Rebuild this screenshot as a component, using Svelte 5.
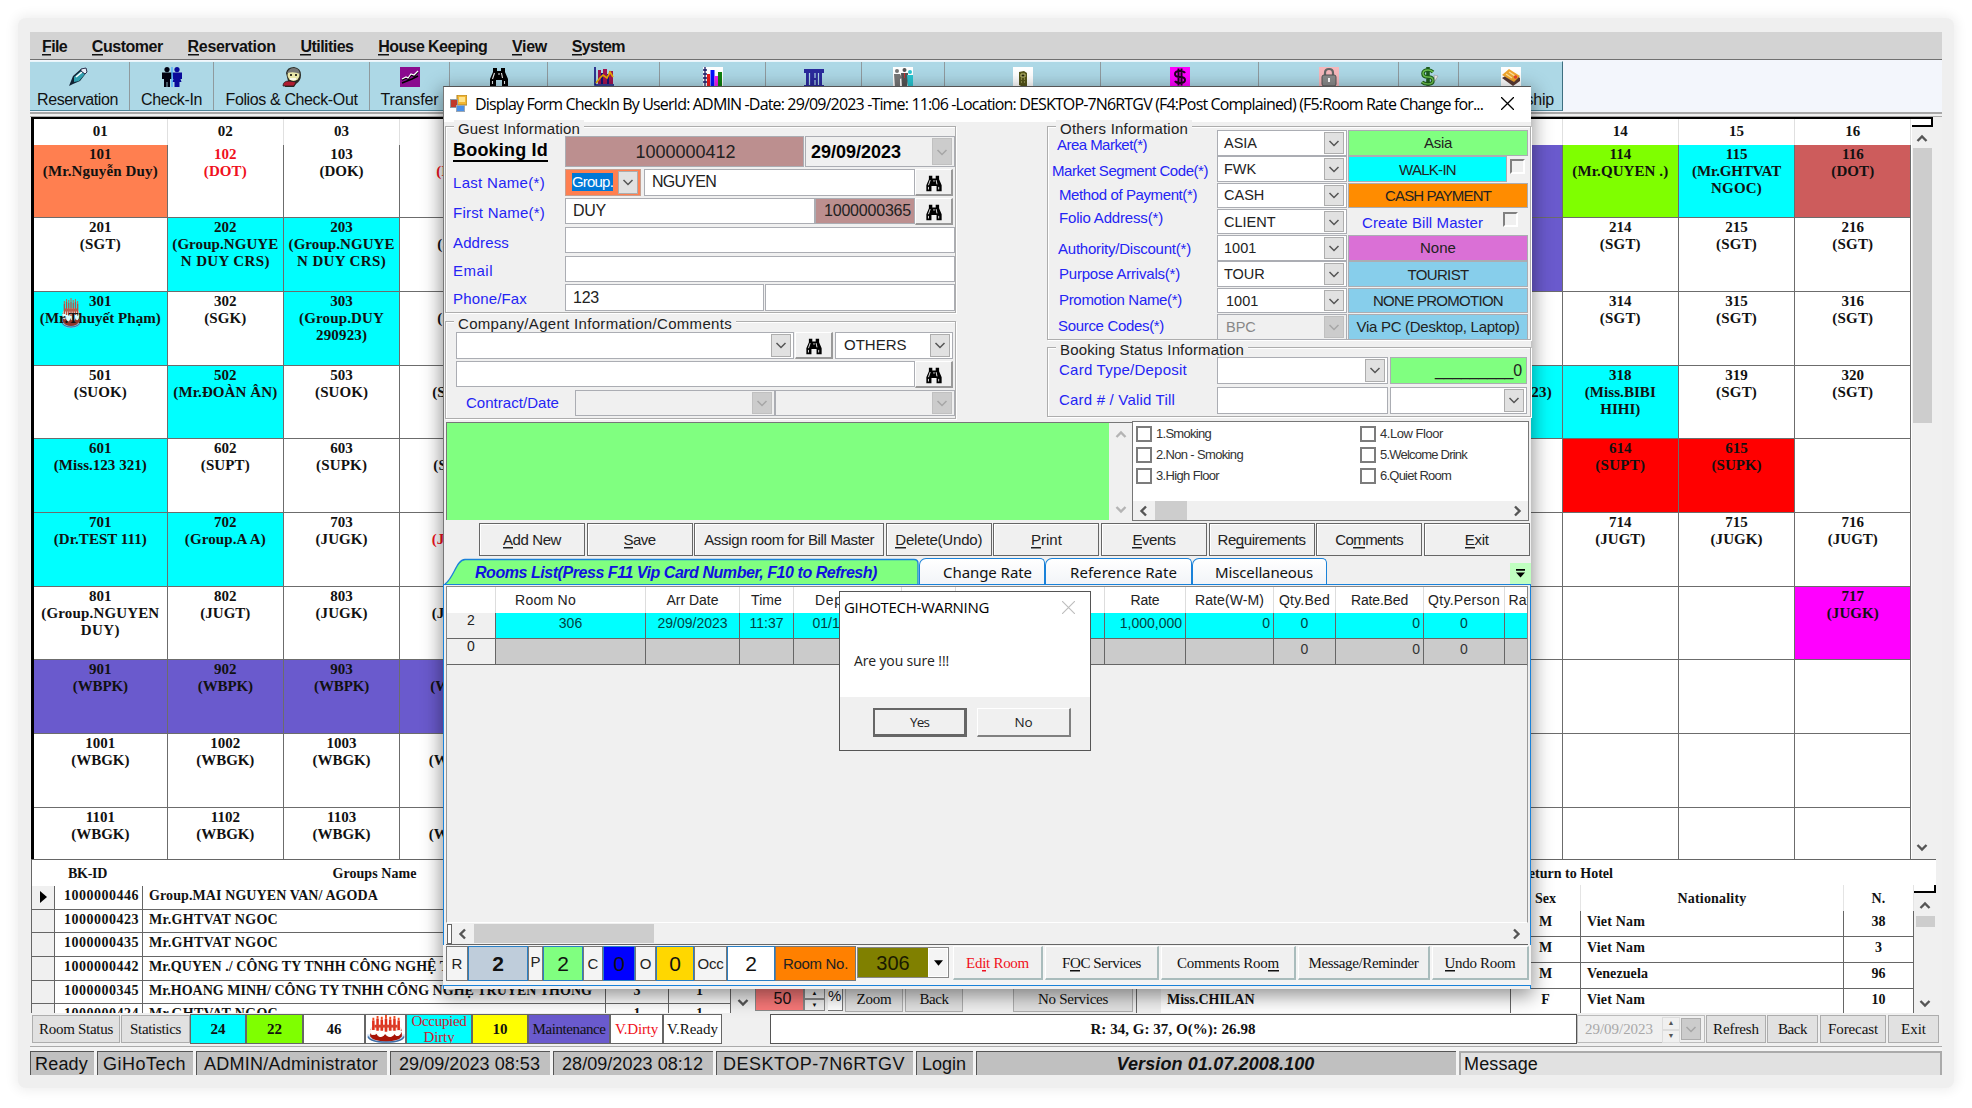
<script>
  // Spreads a label's letters so that it takes exactly `w` pixels.
  function fit(node, w) {
    if (!w) return;
    const n = [...node.textContent].length;
    node.style.letterSpacing = (w - node.getBoundingClientRect().width) / n + 'px';
  }

  const menu = [['&File', 25], ['&Customer', 71], ['&Reservation', 88], ['&Utilities', 53], ['&House Keeping', 109], ['&View', 35], ['&System', 53]];

  const tools = [
    { icon: 'pen', label: 'Reservation', w: 99, tw: 81 }, { icon: 'people', label: 'Check-In', w: 84, tw: 61 },
    { icon: 'face', label: 'Folios & Check-Out', w: 156, tw: 132 }, { icon: 'transfer', label: 'Transfer', w: 80, tw: 58 },
    { icon: 'bino', w: 98 }, { icon: 'chart', w: 112 }, { icon: 'bars', w: 106 }, { icon: 'pillars', w: 96 },
    { icon: 'team', w: 83 }, { icon: 'phone', w: 156 }, { icon: 'cash', w: 158 }, { icon: 'lock', w: 140 },
    { icon: 'dollar', w: 60 }, { icon: 'card', label: 'Membership', w: 105, tw: 86 }
  ];

  const heads = Array.from({ length: 16 }, (_, i) => String(i + 1).padStart(2, '0'));
  const e = null;
  const x9 = Array(9).fill(null);
  // room: [number, colour class, ...[line, width]]
  const rooms = [
    [['101', 'coral', ['(Mr.Nguyễn Duy)', 115]], ['102', 'redtext', ['(DOT)', 43]], ['103', '', ['(DOK)', 44]], ['104', 'redtext', ['(DOT)', 43]], ...x9.slice(1), ['', 'slate'], ['114', 'lime', ['(Mr.QUYEN .)', 96]], ['115', 'cyan', ['(Mr.GHTVAT', 89], ['NGOC)', 51]], ['116', 'indian', ['(DOT)', 43]]],
    [['201', '', ['(SGT)', 41]], ['202', 'cyan', ['(Group.NGUYE', 106], ['N DUY CRS)', 89]], ['203', 'cyan', ['(Group.NGUYE', 106], ['N DUY CRS)', 89]], ['204', '', ['(SGT)', 41]], ...x9.slice(1), ['', 'slate'], ['214', '', ['(SGT)', 41]], ['215', '', ['(SGT)', 41]], ['216', '', ['(SGT)', 41]]],
    [['301', 'cyan cake', ['(Mr.Thuyết Phạm)', 121]], ['302', '', ['(SGK)', 42]], ['303', 'cyan', ['(Group.DUY', 85], ['290923)', 51]], ['304', '', ['(SGT)', 41]], ...x9, ['314', '', ['(SGT)', 41]], ['315', '', ['(SGT)', 41]], ['316', '', ['(SGT)', 41]]],
    [['501', '', ['(SUOK)', 53]], ['502', 'cyan', ['(Mr.ĐOÀN ÂN)', 104]], ['503', '', ['(SUOK)', 53]], ['504', '', ['(SUOT)', 51]], ...x9.slice(1), ['317', 'cyan', ['(Mr.A 290923)', 96]], ['318', 'cyan', ['(Miss.BIBI', 71], ['HIHI)', 40]], ['319', '', ['(SGT)', 41]], ['320', '', ['(SGT)', 41]]],
    [['601', 'cyan', ['(Miss.123 321)', 93]], ['602', '', ['(SUPT)', 49]], ['603', '', ['(SUPK)', 51]], ['604', '', ['(SUPT)', 49]], ...x9, ['614', 'red', ['(SUPT)', 50]], ['615', 'red', ['(SUPK)', 50]], e],
    [['701', 'cyan', ['(Dr.TEST 111)', 93]], ['702', 'cyan', ['(Group.A A)', 81]], ['703', '', ['(JUGK)', 52]], ['704', 'redtext', ['(JUGK)', 52]], ...x9, ['714', '', ['(JUGT)', 50]], ['715', '', ['(JUGK)', 52]], ['716', '', ['(JUGT)', 50]]],
    [['801', '', ['(Group.NGUYEN', 118], ['DUY)', 39]], ['802', '', ['(JUGT)', 50]], ['803', '', ['(JUGK)', 52]], ['804', '', ['(JUGK)', 52]], ...x9, e, e, ['717', 'magenta', ['(JUGK)', 52]]],
    [['901', 'slate', ['(WBPK)', 55]], ['902', 'slate', ['(WBPK)', 55]], ['903', 'slate', ['(WBPK)', 55]], ['904', 'slate', ['(WBPK)', 55]], ...x9, e, e, e],
    [['1001', '', ['(WBGK)', 58]], ['1002', '', ['(WBGK)', 58]], ['1003', '', ['(WBGK)', 58]], ['1004', '', ['(WBGK)', 58]], ...x9, e, e, e],
    [['1101', '', ['(WBGK)', 58]], ['1102', '', ['(WBGK)', 58]], ['1103', '', ['(WBGK)', 58]], ['1104', '', ['(WBGK)', 58]], ...x9, e, e, e]
  ];

  const groups = [
    ['1000000446', 'Group.MAI NGUYEN VAN/ AGODA', 229, '', ''],
    ['1000000423', 'Mr.GHTVAT NGOC', 129, '', ''],
    ['1000000435', 'Mr.GHTVAT NGOC', 129, '', ''],
    ['1000000442', 'Mr.QUYEN ./ CÔNG TY TNHH CÔNG NGHỆ TRUYỀN THÔNG', 406, '', ''],
    ['1000000345', 'Mr.HOANG MINH/ CÔNG TY TNHH CÔNG NGHỆ TRUYỀN THÔNG', 443, '3', '1'],
    ['1000000424', 'Mr.GHTVAT NGOC', 129, '1', '1']
  ];
  const guests = [['', 'M', 'Viet Nam', 58, '38'], ['', 'M', 'Viet Nam', 58, '3'], ['', 'M', 'Venezuela', 61, '96'], ['Miss.CHILAN', 'F', 'Viet Nam', 58, '10']];

  const legend = [
    ['24', 'cyan b', 56], ['22', 'lime b', 57], ['46', 'b', 62], ['', 'cakebox', 41], ['Occupied Dirty', 'cyan rt', 66],
    ['10', 'yellow b', 56], ['Maintenance', 'slate', 82, 73], ['V.Dirty', 'rt', 53, 43], ['V.Ready', '', 59, 51]
  ];

  const status = [
    ['Ready', 64, 53], ['GiHoTech', 96, 83], ['ADMIN/Administrator', 191, 174], ['29/09/2023 08:53', 160, 141],
    ['28/09/2023 08:12', 160, 141], ['DESKTOP-7N6RTGV', 197, 182], ['Login', 57, 44]
  ];

  const others = [
    ['Area Market(*)', 90, 0, 10], ['Market Segment Code(*)', 156, 8, 5], ['Method of Payment(*)', 138, 6, 12], ['Folio Address(*)', 104, 5, 12],
    ['Authority/Discount(*)', 133, 13, 11], ['Purpose Arrivals(*)', 121, 7, 12], ['Promotion Name(*)', 123, 8, 12], ['Source Codes(*)', 106, 8, 11]
  ];
  const codes = [
    ['ASIA', 'Asia', 'lgreen', 28], ['FWK', 'WALK-IN', 'cyan', 57], ['CASH', 'CASH PAYMENT', 'orange', 106], ['CLIENT', '', 'bill', 0],
    ['1001', 'None', 'orchid', 36], ['TOUR', 'TOURIST', 'sky', 61], ['1001', 'NONE PROMOTION', 'sky', 130], ['BPC', 'Via PC (Desktop, Laptop)', 'sky', 163]
  ];

  const prefs = [['1.Smoking', 55, '4.Low Floor', 63], ['2.Non - Smoking', 87, '5.Welcome Drink', 87], ['3.High Floor', 63, '6.Quiet Room', 71]];

  const actions = [
    ['&Add New', 106, 58], ['&Save', 106, 32], ['Assign room for Bill Master', 190, 170], ['&Delete(Undo)', 106, 87], ['&Print', 106, 31],
    ['&Events', 106, 43], ['Re&quirements', 106, 88], ['Co&mments', 106, 68], ['&Exit', 106, 24]
  ];

  const cols = [
    ['', 49, '2', '0', 0, ''], ['Room No', 150, '306', '', 61, 'c rn'], ['Arr Date', 94, '29/09/2023', '', 52, 'c'], ['Time', 54, '11:37', '', 31, 'c'],
    ['Dep Date', 108, '01/10/2023', '', 65, 'c'], ['Time', 54, '12:00', '', 31, 'c'], ['Rate Name', 149, '', '', 66, 'c'],
    ['Rate', 81, '1,000,000', '', 29, 'r'], ['Rate(W-M)', 88, '0', '', 69, 'r'], ['Qty.Bed', 62, '0', '0', 51, 'c'],
    ['Rate.Bed', 88, '0', '0', 57, 'r'], ['Qty.Person', 81, '0', '0', 72, 'c'], ['Rate.Person', 86, '', '', 78, 'c']
  ];

  const totals = [
    ['R', 22, 'tag', 0], ['2', 60, 'steel num b', 0], ['P', 15, 'tag raised', 0], ['2', 40, 'lgreen num', 0], ['C', 20, 'tag', 0], ['0', 32, 'blue num', 0],
    ['O', 21, 'tag', 0], ['0', 38, 'gold num', 0], ['Occ', 33, 'tag', 26], ['2', 48, 'white num', 0], ['Room No.', 81, 'dorange', 65]
  ];
  const roomButtons = [['Ed&it Room', 90, 63, 'rt'], ['F&OC Services', 114, 79, ''], ['Comments Roo&m', 135, 102, ''], ['Message/Reminder', 132, 110, ''], ['&Undo Room', 97, 71, '']];
</script>

{#snippet acc(text, w)}
  {@const i = text.indexOf('&')}
  <span class="t" use:fit={w}>{#if i < 0}{text}{:else}{text.slice(0, i)}<u>{text[i + 1]}</u>{text.slice(i + 2)}{/if}</span>
{/snippet}

{#snippet t(text, w)}<span class="t" use:fit={w}>{text}</span>{/snippet}

{#snippet chev(dir)}
  <svg class="chev to-{dir}" viewBox="0 0 12 12"><path d="M1.5 4 6 8.5 10.5 4" fill="none" stroke="currentColor" stroke-width="1.5" /></svg>
{/snippet}

{#snippet cake()}
  <svg class="cakeicon" viewBox="0 0 36 30" preserveAspectRatio="none">
    <path d="M0 21q1 9 18 9t18-9z" fill="#c9dcf2" /><path d="M1 23q2 6 17 6t17-6" fill="none" stroke="#3f6fa8" stroke-width="1.5" />
    <path d="M3 15v8q3 5 15 5t15-5v-8z" fill="#a81408" />
    <ellipse cx="18" cy="15" rx="15" ry="5" fill="#f6e4dc" />
    <path d="M3 16q0 5 3 5t3-3q1 5 4 5t4-4q2 4 5 4t4-4q1 3 3 3t4-5" fill="#fff" stroke="#fff" />
    <path d="M6 16V6M10 17V4M14 17V5M18 18V4M22 17V5M26 17V4M30 16V6" stroke="#e0301c" stroke-width="2.4" />
    <path d="M7 12h22" stroke="#d8402c" stroke-width="3" />
    <path d="M6 6V3M10 4V1M14 5V2M18 4V0M22 5V2M26 4V1M30 6V3" stroke="#f04a20" stroke-width="1.8" />
  </svg>
{/snippet}

{#snippet icon(name)}
  <svg class="icon" viewBox="0 0 20 20">
    {#if name === 'pen'}
      <path d="M1 19 5 9 13 2l5-1 1 4-7 9-7 3z" fill="#123" /><path d="m6 10 7-6 4 3-6 7-5 1z" fill="#2f9fae" /><path d="m8 10 6-5" stroke="#fff" stroke-width="1.6" /><path d="m13 2 5-1 1 4-2 2-4-3z" fill="#e8eef8" stroke="#113" stroke-width=".8" />
    {:else if name === 'people'}
      <g fill="#000010"><circle cx="5" cy="2.6" r="2.6" /><path d="M0 5.500h9.500V12H8v8H5.400v-5h-.8v5H2v-8H0z" /></g><g fill="#0a0a9a"><circle cx="15" cy="2.6" r="2.6" /><path d="M10.500 5.500H20V12h-1.500l1 3h-2v5h-5v-5h-2l1-3h-.500z" /></g><path d="M10 0v20" stroke="#2aa0ff" />
    {:else if name === 'face'}
      <path d="M4 6Q5 0 12 0q7 1 7 8 0 6-5 9l-2 3H3q0-5 3-6z" fill="#2a2a24" /><circle cx="11.5" cy="8" r="6" fill="#e9e6a8" /><path d="M5 6q2-5 7-5 5 0 6 6-6-3-13-1z" fill="#777" /><path d="M8 8h2M13 8h2" stroke="#000" stroke-width="1.4" /><path d="M1 19q0-5 6-5l7 1-2 4z" fill="#b01c30" stroke="#222" stroke-width=".8" /><path d="M8 12h6" stroke="#fff" stroke-width="1.5" />
    {:else if name === 'transfer'}
      <rect width="20" height="20" fill="#8a0a8e" /><path d="m2 13 4-2 2 1 3-4 3 1 4-4M2 16l5-2 5-2 6-3" stroke="#000" stroke-width="1.6" fill="none" /><path d="m2 12 4-2 2 1 3-4 3 1 4-4" stroke="#fff" stroke-width="1.2" fill="none" />
    {:else if name === 'bino'}
      <path d="M4 1h4v3h4V1h4v4l3 7v7h-6v-6H7v6H1v-7l3-7z" fill="#000" /><path d="M5.5 6 3.5 12M12.5 6l1 5M3.5 14v3M15.5 14v3M9 7h2" stroke="#e8e8e8" stroke-width="1.1" />
    {:else if name === 'chart'}
      <path d="M1 0v18h19" stroke="#10107c" stroke-width="1.6" fill="none" /><path d="M4 3h3v14H4zM9 2h4v15H9zM15 4h4v13h-4z" fill="#a01450" /><path d="M7 6h2v11H7zM13 7h2v10h-2z" fill="#141478" /><path d="m2 16 4-5 3-3 4 3 3-6 3 5" stroke="#e8a800" stroke-width="1.7" fill="none" />
    {:else if name === 'bars'}
      <rect width="20" height="20" fill="#fff" /><path d="M2 0v20M0 3h4M0 7h4M0 11h4M0 15h4" stroke="#1a1a66" stroke-width="1.3" /><path d="M4 7h3v13H4z" fill="#e81818" /><path d="M7.500 3h4v17h-4z" fill="#0010ff" /><path d="M11.500 9h3.500v11h-3.500z" fill="#f020f0" /><path d="M15 5h4v15h-4z" fill="#108010" />
    {:else if name === 'pillars'}
      <path d="M0 2h20v4h-2v12h2v2H0v-2h2V6H0z" fill="#2a2a9c" /><path d="M5.500 6v12M11 6v5M11 13v5M14.500 6v12" stroke="#add8e6" stroke-width="1.2" />
    {:else if name === 'team'}
      <rect width="20" height="20" fill="#fff" /><g fill="#777"><circle cx="4" cy="4" r="2" /><path d="M1 7h6l2 4-2 1v8H2z" /></g><g fill="#555"><circle cx="11.500" cy="3" r="2" /><path d="M8 6h7v8l-1 6H9z" /></g><g fill="#28c4d0"><circle cx="17" cy="5" r="2" /><path d="M14 8h6v12h-5z" /></g><path d="M11.500 6v5" stroke="#c33" />
    {:else if name === 'phone'}
      <rect width="20" height="20" fill="#fff" /><path d="m6 5 5-1 3 2v13l-4 1-4-2z" fill="#55551a" /><path d="M8 7h4v3H8zM8 12h1M11 12h1M8 15h1M11 15h1" stroke="#c8c87a" fill="#22220a" />
    {:else if name === 'cash'}
      <rect width="20" height="20" fill="#ff00ff" /><path d="M15 6Q14 4 10 4 5 4 5 7t5 3 5 3-5 3q-4 0-5-2M8.500 1.500v17M11.500 1.500v17" stroke="#200020" stroke-width="2" fill="none" />
    {:else if name === 'lock'}
      <rect width="20" height="20" fill="#f7b8bc" /><path d="M6 9V6q0-4 4-4t4 4v3" stroke="#666" stroke-width="2.200" fill="none" /><rect x="3" y="8" width="14" height="11" rx="2" fill="#8b8b8b" stroke="#555" /><path d="M10 11v4" stroke="#fff" stroke-width="2" />
    {:else if name === 'dollar'}
      <path d="M14 5Q12 3 9 3 4 3 4 6.500T9 10t5 3.500T9 17q-4 0-6-2M9 0v20" stroke="#1c5c1c" stroke-width="3.600" fill="none" /><path d="M14 5Q12 3 9 3 4 3 4 6.500T9 10t5 3.500T9 17q-4 0-6-2" stroke="#6cc04c" stroke-width="1.500" fill="none" /><path d="m15 8 4 1-3 5z" fill="#eee" stroke="#999" stroke-width=".6" />
    {:else}
      <rect width="20" height="20" fill="#fff" /><path d="m1 11 11 8 7-5v-3l-8-6z" fill="#5a3a34" /><path d="m1 8 7-6 11 7-6 6z" fill="#f2a62c" /><path d="m5 7 6 4M8 5l6 4" stroke="#ffe49a" stroke-width="1.300" /><circle cx="14.500" cy="10" r="1.800" fill="#e8452a" />
    {/if}
  </svg>
{/snippet}

{#snippet combo(text, cls)}
  <span class="field combo {cls}">{#if text}<span class="val">{text}</span>{/if}<span class="drop">{@render chev('down')}</span></span>
{/snippet}

{#snippet findButton()}<span class="find">{@render icon('bino')}</span>{/snippet}

<div class="desk">
  <div class="glow"></div>
  <div class="app">
    <nav class="menu">
      {#each menu as [label, w]}{@render acc(label, w)}{/each}
    </nav>

    <div class="toolbar">
      <div class="tools">
        {#each tools as tool}
          <div class="tool" style:width="{tool.w}px">
            {@render icon(tool.icon)}
            {#if tool.label}{@render t(tool.label, tool.tw)}{/if}
          </div>
        {/each}
      </div>
    </div>
    <div class="ruleline"></div>

    <div class="board">
      <div class="rooms">
        {#each heads as h}<div class="head">{h}</div>{/each}
        {#each rooms as row}
          {#each row as room}
            <div class="room {room?.[1] ?? ''}">
              {#if room}
                {#if room[1].includes('cake')}<i class="cakepin">{@render cake()}</i>{/if}
                {#if room[0]}<span>{room[0]}</span>{/if}
                {#each room.slice(2) as [line, w]}{@render t(line, w)}{/each}
              {/if}
            </div>
          {/each}
        {/each}
      </div>
      <div class="vbar tall">
        <span class="stub"></span>
        {@render chev('up')}
        <span class="thumb"></span>
        <span class="grow"></span>
        {@render chev('down')}
      </div>
    </div>

    <div class="lower">
      <div class="groups">
        <div class="ghead"><span>{@render t('BK-ID', 39)}</span><span>{@render t('Groups Name', 84)}</span></div>
        {#each groups as g, i}
          <div class="grow-row">
            <span class="mark">{#if i === 0}<svg viewBox="0 0 8 12"><path d="M1 0 8 6 1 12z" /></svg>{/if}</span>
            <span class="id">{@render t(g[0], 75)}</span><span class="name">{@render t(g[1], g[2])}</span><span class="n">{g[3]}</span><span class="n">{g[4]}</span>
          </div>
        {/each}
      </div>
      <div class="gbar">{@render chev('down')}</div>
      <div class="zoomer">
        <span class="pct">50</span>
        <span class="spin"><i>▲</i><i>▼</i></span>
        <span class="sign">%</span>
        <span class="btn zb">{@render t('Zoom', 35)}</span>
        <span class="btn zb">{@render t('Back', 29)}</span>
        <span class="btn nos">{@render t('No Services', 70)}</span>
      </div>
      <div class="guests">
        <div class="gtitle">{@render t('Guest Return to Hotel', 133)}</div>
        <div class="gbody">
          <div class="gt">
            <div class="gth"><span></span><span>{@render t('Sex', 21)}</span><span>{@render t('Nationality', 69)}</span><span>{@render t('N.', 14)}</span></div>
            {#each guests as g}
              <div class="gtr"><span class="l">{g[0]}</span><span>{g[1]}</span><span class="l">{@render t(g[2], g[3])}</span><span>{g[4]}</span></div>
            {/each}
          </div>
          <div class="vbar short">
            <span class="stub"></span>
            {@render chev('up')}
            <span class="thumb"></span>
            <span class="grow"></span>
            {@render chev('down')}
          </div>
        </div>
      </div>
    </div>

    <div class="footer">
      <span class="btn rs">{@render t('Room Status', 74)}</span>
      <span class="btn st">{@render t('Statistics', 51)}</span>
      {#each legend as [label, cls, w, tw]}
        <span class="key {cls}" style:width="{w}px">{#if cls === 'cakebox'}{@render cake()}{:else if label.includes(' ')}<span class="two">{@render t('Occupied', 55)}{@render t('Dirty', 31)}</span>{:else}{@render t(label, tw)}{/if}</span>
      {/each}
      <span class="summary">{@render t('R: 34, G: 37, O(%): 26.98', 165)}</span>
      <span class="fdate">{@render t('29/09/2023', 68)}<span class="ud"><i>▲</i><i>▼</i></span><span class="drop">{@render chev('down')}</span></span>
      <span class="btn f1">{@render t('Refresh', 46)}</span>
      <span class="btn f2">{@render t('Back', 29)}</span>
      <span class="btn f3">{@render t('Forecast', 50)}</span>
      <span class="btn f4">{@render t('Exit', 25)}</span>
    </div>

    <div class="status">
      {#each status as [label, w, tw]}<span class="panel" style:width="{w}px">{@render t(label, tw)}</span>{/each}
      <span class="panel version">{@render t('Version 01.07.2008.100', 198)}</span>
      <span class="panel message">{@render t('Message', 74)}</span>
    </div>
  </div>

  <section class="dialog">
    <header class="title">
      <svg class="appicon" viewBox="0 0 17 17"><rect x="7" y="0" width="10" height="10" fill="#f2b632" stroke="#b0842a" /><rect x="9" y="2" width="6" height="5" fill="#ffe38a" /><rect x=".5" y="4.500" width="7" height="8" fill="#c0392b" stroke="#8d9aa5" /><rect x="6.500" y="10.500" width="8" height="6" fill="#4a90e8" stroke="#9aa7b5" /></svg>
      {@render t('Display Form CheckIn By UserId: ADMIN -Date: 29/09/2023 -Time: 11:06 -Location: DESKTOP-7N6RTGV (F4:Post Complained) (F5:Room Rate Change for...', 1008)}
      <svg class="close" viewBox="0 0 12 12"><path d="m0 0 12 12M12 0 0 12" stroke="#000" stroke-width="1.200" /></svg>
    </header>

    <div class="forms">
      <div class="left">
        <div class="box guest">
          <span class="legend">{@render t('Guest Information', 122)}</span>
          <div class="row first"><label class="bk">{@render t('Booking Id', 95)}</label><span class="field rose bid">{@render t('1000000412', 100)}</span><span class="field combo off bdate"><b>{@render t('29/09/2023', 90)}</b><span class="drop">{@render chev('down')}</span></span></div>
          <div class="row"><label>{@render t('Last Name(*)', 92)}</label><span class="field combo coral grp"><span class="sel">{@render t('Group.', 41)}</span><span class="drop">{@render chev('down')}</span></span><span class="field last">{@render t('NGUYEN', 64)}</span>{@render findButton()}</div>
          <div class="row"><label class="lo">{@render t('First Name(*)', 92)}</label><span class="field fn">{@render t('DUY', 33)}</span><span class="field rose gid">{@render t('1000000365', 87)}</span>{@render findButton()}</div>
          <div class="row"><label class="lower-l">{@render t('Address', 56)}</label><span class="field wide"></span></div>
          <div class="row"><label class="lo">{@render t('Email', 40)}</label><span class="field wide"></span></div>
          <div class="row"><label class="lo">{@render t('Phone/Fax', 74)}</label><span class="field ph">{@render t('123', 26)}</span><span class="field fx"></span></div>
        </div>
        <div class="box company">
          <span class="legend">{@render t('Company/Agent Information/Comments', 274)}</span>
          <div class="row">{@render combo('', 'agent')}{@render findButton()}{@render combo('OTHERS', 'oth')}</div>
          <div class="row"><span class="field note"></span>{@render findButton()}</div>
          <div class="row"><label class="ct">{@render t('Contract/Date', 93)}</label>{@render combo('', 'off c1')}{@render combo('', 'off c2')}</div>
        </div>
      </div>

      <div class="right">
        <div class="box info">
          <span class="legend">{@render t('Others Information', 128)}</span>
          <div class="labels">
            {#each others as [label, w, gap, pad]}<label style:margin-top="{gap}px" style:padding-left="{pad - 5}px">{@render t(label, w)}</label>{/each}
          </div>
          <div class="codes">
            {#each codes as [code, name, cls, w], i}
              <div class="code">
                {@render combo(code, i === 7 ? 'off cc' : 'cc')}
                {#if cls === 'bill'}
                  <span class="bill">{@render t('Create Bill Master', 121)}<i class="chk"></i></span>
                {:else}
                  <span class="field cn {cls}">{@render t(name, w)}</span>{#if i === 1}<i class="chk seg"></i>{/if}
                {/if}
              </div>
            {/each}
          </div>
        </div>
        <div class="box booking">
          <span class="legend">{@render t('Booking Status Information', 184)}</span>
          <div class="row"><label>{@render t('Card Type/Deposit', 128)}</label>{@render combo('', 'card')}<span class="field lgreen dep">{@render t('_________0', 87)}</span></div>
          <div class="row"><label>{@render t('Card # / Valid Till', 116)}</label><span class="field card"></span>{@render combo('', 'till')}</div>
        </div>
      </div>
    </div>

    <div class="mid">
      <div class="memo"><div class="memobar">{@render chev('up')}{@render chev('down')}</div></div>
      <div class="prefs">
        {#each prefs as [a, aw, b, bw]}
          <div class="pref"><i></i>{@render t(a, aw)}<i></i>{@render t(b, bw)}</div>
        {/each}
        <div class="hbar">{@render chev('left')}<span class="thumb"></span><span class="grow"></span>{@render chev('right')}</div>
      </div>
    </div>

    <div class="actions">
      {#each actions as [label, w, tw]}<span class="act" style:width="{w}px">{@render acc(label, tw)}</span>{/each}
    </div>

    <div class="tabs">
      <div class="tab on">
        <svg viewBox="0 0 475 26" preserveAspectRatio="none"><path d="M1 26C10 20 12 2 21 1.500H470q4 0 4 4V26" fill="#80ff80" stroke="#1a82d9" stroke-width="1.300" /></svg>
        {@render t('Rooms List(Press F11 Vip Card Number, F10 to Refresh)', 402)}
      </div>
      <div class="tab t1">{@render t('Change Rate', 89)}</div>
      <div class="tab t2">{@render t('Reference Rate', 107)}</div>
      <div class="tab t3">{@render t('Miscellaneous', 98)}</div>
      <div class="more"><svg viewBox="0 0 10 10"><path d="M0 0h10v2H0zM0 4h10L5 9.500z" /></svg></div>
    </div>

    <div class="page">
      <div class="sheet">
        {#each cols as [head, w, a, b, hw, al], i}
          <div class="col {al}" class:rowhead={i === 0} style:width="{w}px">
            <div class="ch">{#if head}{@render t(head, hw)}{/if}</div><div class="c1r">{a}</div><div class="c2r">{b}</div>
          </div>
        {/each}
      </div>
      <div class="blank"></div>
      <div class="hbar wide-bar"><i class="split"></i>{@render chev('left')}<span class="thumb"></span><span class="grow"></span>{@render chev('right')}</div>
      <div class="totals">
        {#each totals as [label, w, cls, tw]}<span class="tot {cls}" style:width="{w}px">{@render t(label, tw)}</span>{/each}
        <span class="pick"><span>306</span><i><svg viewBox="0 0 10 6"><path d="M0 0h10L5 6z" /></svg></i></span>
        {#each roomButtons as [label, w, tw, cls]}<span class="rb {cls}" style:width="{w}px">{@render acc(label, tw)}</span>{/each}
      </div>
    </div>
  </section>

  <section class="modal">
    <header>{@render t('GIHOTECH-WARNING', 145)}<svg viewBox="0 0 12 12"><path d="m0 0 12 12M12 0 0 12" stroke="#bdbdbd" /></svg></header>
    <p>{@render t('Are you sure !!!', 95)}</p>
    <footer><span class="yes">{@render t('Yes', 19)}</span><span class="no">{@render t('No', 18)}</span></footer>
  </section>
</div>

<style>
  :global(body) { margin: 0; background: #fff; }
  * { box-sizing: border-box; }
  .desk { position: relative; width: 1972px; height: 1108px; padding: 32px 30px; overflow: hidden; background: #fff; font: 15px/18px "Liberation Sans", Arial, sans-serif; color: #111; }
  .glow { position: absolute; left: 18px; top: 18px; width: 1936px; height: 1070px; border-radius: 8px; background: #efefef; box-shadow: 0 0 12px 3px #efefef; }
  .t { display: inline-block; white-space: nowrap; flex: none; }
  u { text-decoration: none; background: linear-gradient(currentColor, currentColor) left bottom / 100% 1.500px no-repeat; padding-bottom: 1px; }
  i { font-style: normal; }
  .grow { flex: 1; }
  .icon { width: 20px; height: 20px; flex: none; }
  .chev { width: 12px; height: 12px; flex: none; color: #555; }
  .chev.to-up { transform: rotate(180deg); }
  .chev.to-left { transform: rotate(90deg); }
  .chev.to-right { transform: rotate(-90deg); }
  .vbar .chev path, .hbar .chev path, .gbar .chev path, .memobar .chev path { stroke-width: 2.4; }

  .cyan { background: #0ff; }
  .coral { background: #ff7f50; }
  .lime { background: #7fff00; }
  .indian { background: #cd5c5c; }
  .slate { background: #6a5acd; }
  .red { background: #f00; }
  .magenta { background: #f0f; }
  .yellow { background: #ff0; }
  .redtext, .rt { color: #f01020; }
  .b { font-weight: bold; }

  .app { position: relative; width: 1912px; height: 1043px; display: flex; flex-direction: column; background: #f0f0f0; }
  .menu { height: 28px; flex: none; background: #d3d3d3; border-bottom: 1px solid #707070; display: flex; gap: 24.800px; align-items: center; padding: 2px 0 0 12px; font-weight: bold; font-size: 16px; }
  .toolbar { height: 52px; flex: none; background: #f3f6fc; padding-top: 1px; }
  .tools { display: flex; width: 1533px; height: 50px; background: #add8e6; border-right: 1px solid #3d6f80; border-bottom: 1px solid #4f8699; border-top: 1px solid #e8f6fb; }
  .tool { flex: none; display: flex; flex-direction: column; align-items: center; padding-top: 5px; gap: 4px; font-size: 16px; border-left: 1px solid #8f9a9e; }
  .tool:first-child { border-left: 0; padding-right: 4px; }
  .ruleline { height: 5px; flex: none; background: #f0f0f0; border-top: 2px solid #a8a8a8; border-bottom: 1px solid #aaa; }

  .board { height: 742px; flex: none; margin-left: 1px; display: flex; border-top: 2px solid #000; border-left: 3px solid #000; width: 1902px; background: #fff; }
  .rooms { display: grid; grid-template-columns: 133.700px repeat(15, 116.250px); grid-template-rows: 25.800px; grid-auto-rows: 73.670px; width: 1877.700px; height: 740px; overflow: hidden; font: bold 15px/17px "Liberation Serif", "Times New Roman", serif; text-align: center; }
  .head { border-right: 1px solid #e0e0e0; padding-top: 4px; }
  .room { position: relative; border-right: 1px solid #6c6c6c; border-bottom: 1px solid #6c6c6c; padding-top: 1px; display: flex; flex-direction: column; align-items: center; overflow: hidden; }
  .cakepin { position: absolute; left: 27px; top: 6px; width: 20px; height: 30px; display: flex; opacity: .85; }
  .cakepin .cakeicon { width: 20px; height: 30px; }
  .room > span { position: relative; }
  .vbar { display: flex; flex-direction: column; align-items: center; background: #f0f0f0; }
  .tall { width: 21px; padding-bottom: 6px; }
  .stub { width: 100%; height: 8px; background: #fff; border-right: 2px solid #000; border-bottom: 2px solid #000; margin-bottom: 6px; flex: none; }
  .tall .thumb { width: 19px; height: 275px; margin-top: 3px; background: #cdcdcd; }

  .lower { height: 154px; flex: none; display: flex; overflow: hidden; background: #f0f0f0; border-top: 1px solid #666; margin: 0 6px 0 1px; font: bold 14px/17px "Liberation Serif", "Times New Roman", serif; }
  .groups { width: 700px; flex: none; background: #fff; border-left: 1px solid #666; }
  .grow-row { display: grid; grid-template-columns: 23px 88px 463px 63px 62px; }
  .ghead { display: grid; grid-template-columns: 111px 463px; height: 26px; text-align: center; align-items: center; }
  .grow-row { height: 23.670px; }
  .grow-row > span { border-right: 1px solid #666; border-bottom: 1px solid #666; padding-top: 1px; white-space: nowrap; overflow: hidden; }
  .mark { background: #f0f0f0; padding-left: 7px; }
  .mark svg { width: 8px; height: 12px; margin-top: 4px; }
  .id { padding-left: 9px; }
  .name { padding-left: 6px; }
  .n { text-align: center; }
  .gbar { width: 24px; flex: none; display: flex; align-items: flex-end; justify-content: center; padding-bottom: 5px; }
  .zoomer { width: 381px; flex: none; display: flex; padding-top: 127px; font-weight: normal; font-size: 15px; }
  .btn { display: flex; align-items: center; justify-content: center; background: #e1e1e1; border: 1px solid #adadad; font-family: "Liberation Serif", "Times New Roman", serif; font-size: 15px; font-weight: normal; flex: none; }
  .pct { width: 49px; height: 24px; background: #f87878; border: 1px solid #888; display: flex; align-items: center; justify-content: center; font: 16px "Liberation Sans", Arial, sans-serif; padding-left: 6px; flex: none; }
  .spin, .ud { display: flex; flex-direction: column; }
  .spin { width: 21px; height: 24px; }
  .spin i { flex: 1; font-size: 6px; line-height: 10px; text-align: center; border: 1px solid #888; background: #eee; }
  .sign { width: 15px; height: 24px; margin-left: 3px; background: #fff; border-right: 1px solid #777; border-bottom: 1px solid #777; flex: none; font-family: "Liberation Sans", Arial, sans-serif; }
  .zb { width: 58px; height: 25px; margin-left: 2px; }
  .nos { width: 120px; height: 25px; margin-left: 50px; padding-bottom: 1px; }
  .guests { flex: 1; background: #fff; border-left: 1px solid #666; }
  .gtitle { height: 25px; padding: 5px 0 0 343px; }
  .gbody { display: flex; }
  .gt { width: 777px; flex: none; border-left: 24px solid #f0f0f0; }
  .gth, .gtr { display: grid; grid-template-columns: 350px 70px 263px 1fr; text-align: center; }
  .gth { height: 26px; line-height: 28px; }
  .gth > span { border-right: 1px solid #e4e4e4; }
  .gtr { height: 26px; }
  .gtr > span { border-right: 1px solid #666; border-bottom: 1px solid #666; padding-top: 2px; }
  .gtr .l { text-align: left; padding-left: 6px; }
  .short { width: 22px; height: 128px; padding-bottom: 4px; }
  .short .stub { margin-bottom: 7px; }
  .short .thumb { width: 19px; height: 11px; margin-top: 4px; background: #cdcdcd; }

  .footer { height: 33px; flex: none; display: flex; padding: 1px 0 0 2px; font: 15px/17px "Liberation Serif", "Times New Roman", serif; align-items: flex-start; }
  .footer .btn { height: 28px; margin-top: 1px; padding-top: 1px; }
  .rs { width: 88px; }
  .st { width: 69px; margin-left: 1px; }
  .key { height: 30px; border: 1px solid #666; background: #fff; display: flex; align-items: center; justify-content: center; overflow: hidden; flex: none; }
  .key.cyan { background: #0ff; } .key.lime { background: #7fff00; } .key.yellow { background: #ff0; } .key.slate { background: #6a5acd; }
  .two { display: flex; flex-direction: column; align-items: center; line-height: 16px; margin-top: -1px; color: #d02030; }
  .cakebox .cakeicon { width: 38px; height: 28px; }
  .summary { width: 807px; height: 30px; margin-left: 48px; border: 1px solid #555; background: #fff; display: flex; align-items: center; justify-content: center; font-weight: bold; padding: 1px 1px 0 0; flex: none; }
  .fdate { width: 128px; height: 28px; margin-top: 1px; border: 1px solid #bbb; display: flex; align-items: center; padding: 1px 2px 1px 7px; color: #a8a8a8; flex: none; }
  .ud { width: 18px; height: 24px; margin-left: 9px; }
  .ud i { flex: 1; font-size: 7px; line-height: 11px; text-align: center; color: #555; border: 1px solid #ddd; }
  .fdate .drop { margin: 0 0 0 1px; background: #ccc; }
  .fdate .chev { color: #a6a6a6; }
  .f1 { width: 60px; margin-left: 1px; } .f2 { width: 51px; margin-left: 1px; } .f3 { width: 66px; margin-left: 2px; } .f4 { width: 51px; margin-left: 2px; }

  .status { flex: 1; display: flex; gap: 3px; padding-top: 4px; font-size: 18px; line-height: 22px; border-top: 1px solid #aaa; background: #f4f4f4; }
  .panel { flex: none; background: #c0c0c0; border-top: 1px solid #555; border-left: 1px solid #555; display: flex; align-items: center; justify-content: center; padding-right: 2px; }
  .version { width: 480px; font-weight: bold; font-style: italic; }
  .message { flex: 1; background: #e1e1e1; border: 2px solid #aaa; border-bottom: 0; justify-content: flex-start; padding-left: 3px; }

  .dialog { position: absolute; left: 443px; top: 86px; width: 1088px; height: 903px; background: #f0f0f0; border-top: 1px solid #555; border-left: 1px solid #777; box-shadow: 0 5px 18px 2px rgba(0, 0, 0, .42); display: flex; flex-direction: column; }
  .title { height: 35px; flex: none; background: #fff; display: flex; align-items: center; padding: 0 0 2px 6px; font: 16px/20px "Open Sans", "Noto Sans", sans-serif; color: #000; }
  .appicon { width: 17px; height: 17px; margin-right: 8px; }
  .close { width: 13px; height: 13px; margin-left: 18px; }

  .forms { height: 299px; flex: none; display: flex; }
  .left { width: 603px; padding: 4px 0 0 1px; }
  .right { width: 484px; padding-top: 4px; }
  .box { position: relative; border: 1px solid #adadad; box-shadow: 1px 1px 0 #fff, inset 1px 1px 0 #fff; }
  .legend { position: absolute; left: 8px; top: -7px; padding: 0 4px; height: 16px; background: #f0f0f0; line-height: 17px; color: #222; }
  label { color: #2424f4; }
  .row { display: flex; height: 28.850px; }
  .field { height: 26.500px; border: 1px solid #abadb3; background: #fff; display: flex; align-items: center; padding-left: 7px; font-size: 16px; color: #222; flex: none; }
  .drop { width: 20px; height: calc(100% - 2px); margin: 0 2px 0 auto; background: #e1e1e1; border: 1px solid #adadad; display: flex; align-items: center; justify-content: center; flex: none; }
  .off { background: #f0f0f0; color: #888; }
  .off .drop { background: #ccc; border-color: #c0c0c0; }
  .off .chev { color: #a6a6a6; }
  .find { width: 38px; height: 27px; flex: none; background: #f0f0f0; border: 1px solid #fff; border-right: 2px solid #999; border-bottom: 2px solid #999; display: flex; align-items: center; justify-content: center; }
  .find .icon { width: 18px; height: 17px; margin: 3px 0 0 1px; }

  .guest { width: 511px; height: 187px; padding-top: 9px; }
  .guest label { width: 119px; padding: 5px 0 0 7px; flex: none; }
  .guest label.lo { padding-top: 6px; }
  .guest label.lower-l { padding-top: 7px; }
  .guest .row.first { height: 33px; }
  .guest .bk { color: #000; font-weight: bold; font-size: 18px; padding-top: 4px; }
  .bk .t { border-bottom: 2px solid #000; line-height: 20px; }
  .bid { width: 239px; height: 31px; justify-content: center; font-size: 18px; padding: 0 0 0 2px; }
  .rose { background: #bc8f8f; }
  .bdate { width: 150px; height: 31px; margin-left: 1px; font-size: 18px; padding-left: 5px; }
  .bdate b { color: #000; }
  .grp { width: 76px; background: #ff7f50; border-color: #c8a090; padding-left: 6px; }
  .sel { background: #0078d7; color: #fff; height: 18px; line-height: 18px; font-size: 15px; }
  .last { width: 271px; margin-left: 3px; }
  .fn { width: 250px; }
  .gid { width: 100px; justify-content: flex-end; padding-right: 3px; }
  .wide { width: 390px; }
  .ph { width: 199px; }
  .fx { width: 190px; margin-left: 1px; }
  .company { width: 511px; height: 98px; margin-top: 8px; padding: 10px 0 0 10px; }
  .agent { width: 338px; margin-right: 1px; }
  .oth { width: 118px; margin-left: 2px; font-size: 15px; padding-left: 8px; }
  .note { width: 459px; }
  .ct { width: 119px; padding: 4px 0 0 10px; }
  .c1 { width: 200px; } .c2 { width: 180px; }

  .info { height: 214px; display: flex; padding-top: 3px; }
  .labels { width: 169px; padding: 6px 0 0 4px; display: flex; flex-direction: column; }
  .code { display: flex; height: 26.300px; }
  .cc { width: 130px; height: 25.500px; font-size: 14.500px; padding-left: 6px; }
  .code:nth-child(n + 7) .cc { padding-left: 8px; }
  .cn { width: 180px; height: 25.500px; font-size: 15px; justify-content: center; margin-left: 1px; padding: 1px 0 0; }
  .cn.cyan { width: 159px; background: #0ff; }
  .lgreen { background: #80ff80; } .orange { background: #ff8c00; } .orchid { background: #da70d6; } .sky { background: #87ceeb; }
  .bill { width: 180px; padding: 5px 0 0 15px; display: flex; color: #2424f4; }
  .chk { width: 15px; height: 15px; border: 2px solid #808080; border-right-color: #fff; border-bottom-color: #fff; background: #f0f0f0; margin: -2px 0 0 20px; }
  .chk.seg { margin: 3px 0 0 3px; }
  .booking { height: 70px; margin-top: 7px; padding-top: 9px; }
  .booking label { width: 169px; padding: 4px 0 0 11px; flex: none; }
  .booking .row { height: 30px; }
  .card { width: 171px; }
  .dep { width: 137px; margin-left: 2px; justify-content: flex-end; padding: 2px 4px 0 0; }
  .till { width: 137px; margin-left: 2px; }

  .mid { height: 101px; flex: none; display: flex; padding-left: 2px; }
  .memo { width: 686px; height: 98px; margin-top: 1px; background: #80ff80; border-top: 1px solid #777; border-left: 1px solid #777; display: flex; justify-content: flex-end; }
  .memobar { width: 23px; background: #f0f0f0; display: flex; flex-direction: column; justify-content: space-between; align-items: center; padding: 6px 0 5px; }
  .memobar .chev { color: #b4b4b4; }
  .prefs { width: 397px; height: 100px; border: 1px solid #777; background: #fff; display: flex; flex-direction: column; padding-top: 1px; font-size: 13px; color: #333; }
  .pref { height: 21.300px; padding-left: 3px; display: grid; grid-template-columns: 20px 204px 20px auto; align-items: center; justify-items: start; }
  .pref i { width: 16px; height: 16px; border: 2px solid #7c7c7c; }
  .hbar { height: 19px; margin-top: auto; background: #f0f0f0; display: flex; align-items: center; padding: 0 5px; }
  .hbar .thumb { width: 32px; height: 19px; background: #cdcdcd; margin-left: 5px; }

  .actions { height: 35px; flex: none; display: flex; padding: 1px 0 0 35px; gap: 1.600px; }
  .act { height: 33px; border: 1px solid #666; display: flex; align-items: center; justify-content: center; flex: none; box-shadow: inset 1px 1px 0 #fff; font-size: 15px; color: #222; }

  .tabs { height: 27px; flex: none; display: flex; padding-top: 1px; }
  .tab { height: 26px; padding-top: 6px; }
  .tab.on { position: relative; width: 475px; padding-left: 31px; font: italic bold 16px/18px "Liberation Sans", Arial, sans-serif; color: #1010e0; }
  .tab.on svg { position: absolute; inset: 0; width: 475px; height: 26px; }
  .tab.on .t { position: relative; }
  .t1, .t2, .t3 { border: 1.500px solid #1a82d9; border-bottom: 0; border-radius: 7px 5px 0 0; background: linear-gradient(#fff, #f2f4f8); font-family: "Noto Sans", "Open Sans", sans-serif; font-size: 15px; padding-top: 4px; }
  .t1 { width: 126px; padding-left: 23px; } .t2 { width: 147px; padding-left: 24px; } .t3 { width: 135px; padding-left: 22px; }
  .more { width: 21px; height: 21px; margin: 5px 0 0 auto; background: #c0ffc0; display: flex; align-items: center; justify-content: center; }
  .more svg { width: 9px; height: 9px; }

  .page { flex: 1; margin-left: -1px; border-top: 1px solid #1a82d9; border-left: 1.500px solid #1a82d9; border-right: 1.500px solid #1a82d9; display: flex; flex-direction: column; padding: 1px 2px 0; min-height: 0; }
  .sheet { width: 1082px; height: 80px; flex: none; border-top: 1px solid #888; border-left: 1px solid #888; display: flex; overflow: hidden; font-size: 14px; border-right: 1px solid #888; }
  .col { flex: none; text-align: center; line-height: 16px; }
  .ch { height: 26px; background: #fff; border-right: 1px solid #ddd; padding-top: 5px; color: #222; }
  .rn .ch { padding-right: 50px; }
  .c1r, .c2r { height: 26px; border-right: 1px solid #666; border-bottom: 1px solid #666; padding-top: 2px; }
  .c1r { background: #0ff; color: #044; } .c2r { background: #cbcbcb; color: #333; }
  .rowhead .c1r, .rowhead .c2r { background: #f0f0f0; color: #222; padding-top: 0; line-height: 14px; }
  .r .c1r, .r .c2r { text-align: right; padding-right: 3px; }
  .blank { flex: 1; border-left: 1px solid #999; border-right: 1px solid #999; border-bottom: 1px solid #fff; }
  .hbar.wide-bar { height: 22px; flex: none; margin: 0; border-bottom: 1px solid #666; padding: 0 6px 0 1px; }
  .split { width: 5px; height: 20px; border: 1px solid #666; background: #fff; margin-right: 5px; }
  .wide-bar .thumb { width: 180px; }
  .totals { height: 41px; flex: none; border-bottom: 1.500px solid #1a82d9; margin: 0 -3px 3px; padding: 1px 0 0 3px; display: flex; background: #f4f4f4; }
  .tot { height: 35px; border: 1px solid #777; display: flex; align-items: center; justify-content: center; flex: none; font-size: 15px; color: #222; }
  .raised { padding-bottom: 4px; }
  .tot.num { font-size: 21px; border: 1.500px solid #2a7fc4; color: #111; }
  .steel { background: #bfcddb; } .blue { background: #00f; } .gold { background: #ffd700; } .white { background: #fff; } .dorange { background: #ff8000; }
  .pick { width: 92px; height: 31px; margin: 1px 4px 0 1px; border: 1px solid #888; background: #808000; display: flex; font-size: 20px; flex: none; align-items: center; }
  .pick > span { flex: 1; text-align: center; color: #1a1a00; }
  .pick i { width: 20px; height: 100%; background: #f4f4f4; display: flex; align-items: center; justify-content: center; border: 1px solid #fff; }
  .pick svg { width: 9px; height: 6px; }
  .rb { height: 34px; flex: none; margin-right: 2px; background: #f0f0f0; border: 1px solid #fff; border-right: 2px solid #a9bcbc; border-bottom: 2px solid #a9bcbc; display: flex; align-items: center; justify-content: center; font: 15px/17px "Liberation Serif", "Times New Roman", serif; padding-top: 1px; }

  .modal { position: absolute; left: 839px; top: 591px; width: 252px; height: 160px; border: 1px solid #555; background: #fff; display: flex; flex-direction: column; font: 14px/18px "Open Sans", "Noto Sans", sans-serif; color: #222; }
  .modal header { display: flex; align-items: center; height: 30px; padding-left: 4px; font-size: 15px; color: #000; }
  .modal header svg { width: 13px; height: 13px; margin-left: 73px; }
  .modal p { margin: 30px 0 0 14px; font-size: 14px; }
  .modal footer { margin-top: auto; height: 53px; background: #f0f0f0; display: flex; padding: 11px 0 0 33px; gap: 10px; font-size: 13.500px; }
  .yes, .no { width: 94px; height: 29px; display: flex; align-items: center; justify-content: center; border: 1px solid #fff; border-right: 2px solid #808080; border-bottom: 2px solid #808080; }
  .yes { border: 2px solid #666; border-right-width: 3px; border-bottom-width: 3px; }
</style>
